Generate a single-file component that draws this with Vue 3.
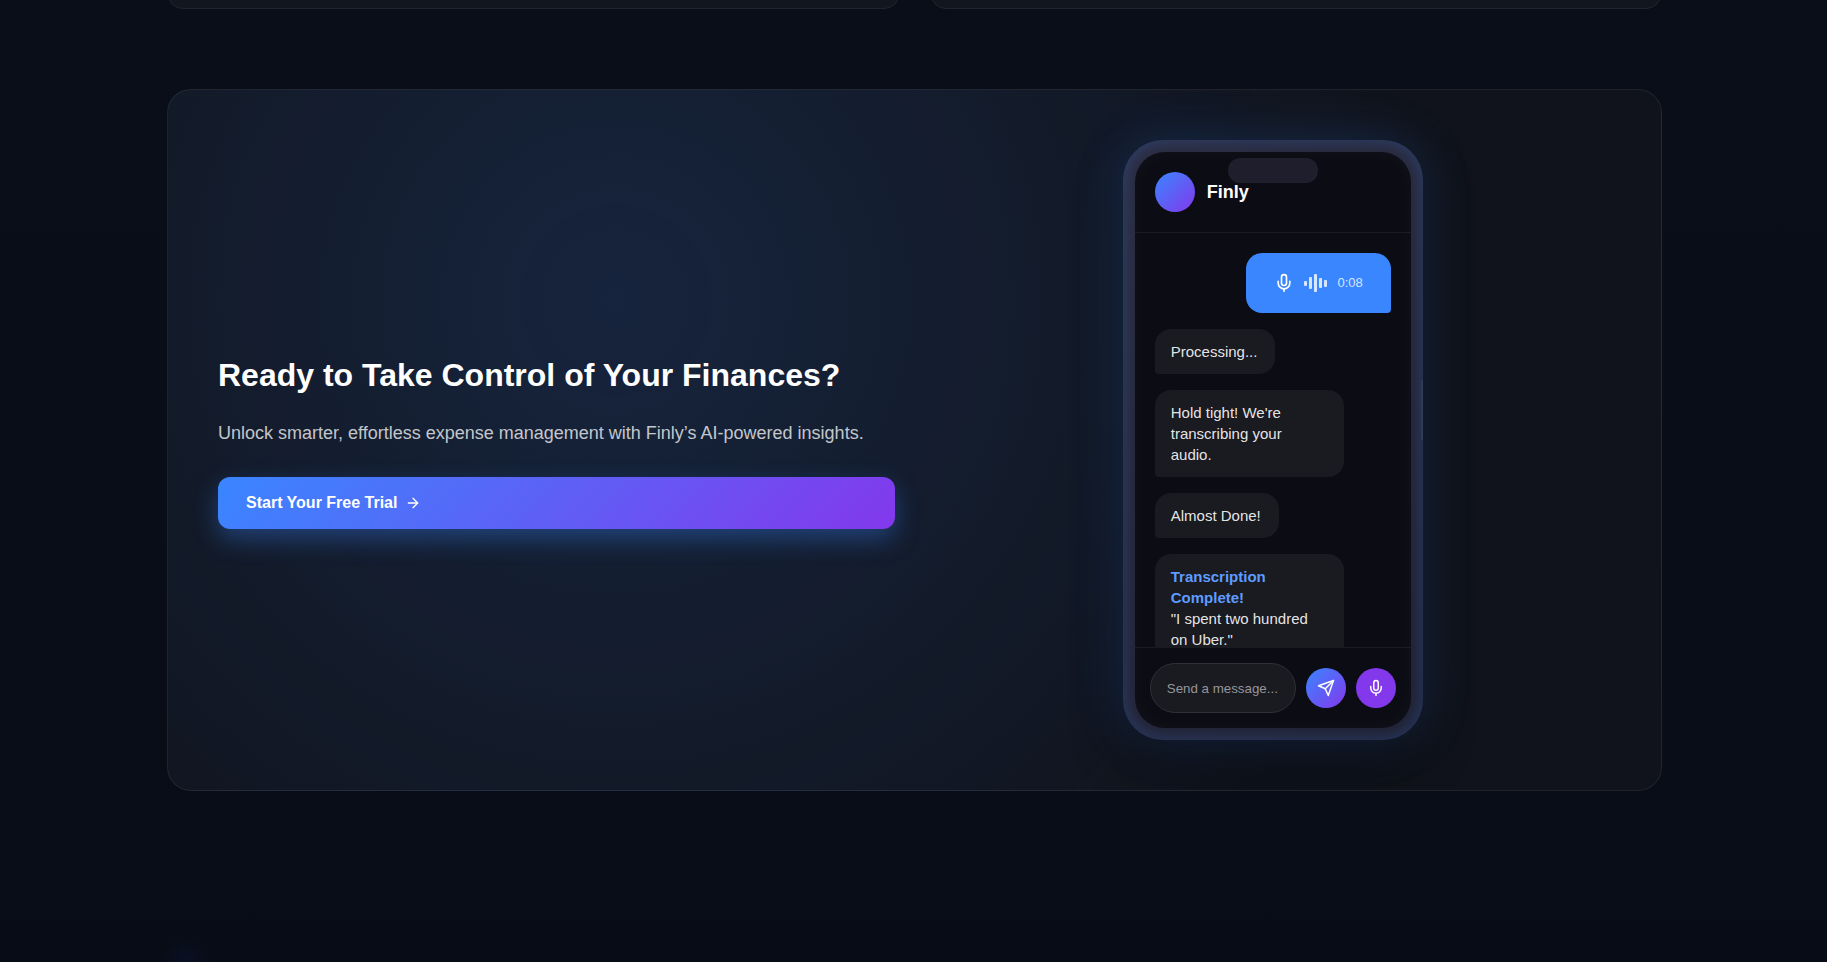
<script setup>
import { ref } from 'vue'

const draft = ref('')
const bars = [5, 12, 18, 10, 7]
</script>

<template>
  <main class="page">
    <div class="features">
      <div class="feature"></div>
      <div class="feature"></div>
    </div>

    <section class="cta">
      <div class="copy">
        <h2>Ready to Take Control of Your Finances?</h2>
        <p>Unlock smarter, effortless expense management with Finly’s AI-powered insights.</p>
        <a class="trial" href="#">
          Start Your Free Trial
          <svg class="icon-sm" viewBox="0 0 24 24" aria-hidden="true">
            <path d="M5 12h14" />
            <path d="m12 5 7 7-7 7" />
          </svg>
        </a>
      </div>

      <div class="stage">
        <div class="phone">
          <div class="notch"></div>
          <div class="side-key"></div>
          <div class="screen">
            <header class="chat-head">
              <span class="avatar"></span>
              <span class="name">Finly</span>
            </header>

            <div class="messages">
              <div class="bubble sent">
                <div class="voice">
                  <svg class="icon-lg" viewBox="0 0 24 24" aria-hidden="true">
                    <path d="M12 2a3 3 0 0 0-3 3v7a3 3 0 0 0 6 0V5a3 3 0 0 0-3-3Z" />
                    <path d="M19 10v2a7 7 0 0 1-14 0v-2" />
                    <path d="M12 19v3" />
                  </svg>
                  <div class="wave">
                    <span v-for="(h, i) in bars" :key="i" :style="{ height: h + 'px' }"></span>
                  </div>
                  <span class="time">0:08</span>
                </div>
              </div>
              <div class="bubble">Processing...</div>
              <div class="bubble">Hold tight! We're transcribing your audio.</div>
              <div class="bubble">Almost Done!</div>
              <div class="bubble"><strong>Transcription Complete!</strong><br />"I spent two hundred on Uber."</div>
            </div>

            <form class="composer" @submit.prevent>
              <input v-model="draft" type="text" aria-label="Message" placeholder="Send a message..." />
              <button class="send" type="submit" aria-label="Send">
                <svg class="icon-md" viewBox="0 0 24 24" aria-hidden="true">
                  <path d="M22 2 11 13" />
                  <path d="m22 2-7 20-4-9-9-4Z" />
                </svg>
              </button>
              <button class="record" type="button" aria-label="Record audio">
                <svg class="icon-md" viewBox="0 0 24 24" aria-hidden="true">
                  <path d="M12 2a3 3 0 0 0-3 3v7a3 3 0 0 0 6 0V5a3 3 0 0 0-3-3Z" />
                  <path d="M19 10v2a7 7 0 0 1-14 0v-2" />
                  <path d="M12 19v3" />
                </svg>
              </button>
            </form>
          </div>
        </div>
      </div>
    </section>
  </main>
</template>

<style>
body {
  background: #080d17;
}
</style>

<style scoped>
* {
  box-sizing: border-box;
}

.page {
  min-height: 100vh;
  padding: 0 165px 80px 167px;
  overflow: hidden;
  color: #fff;
  font-family: "Liberation Sans", Arial, sans-serif;
  background:
    radial-gradient(circle at 186px 100%, rgba(20, 32, 84, 0.22), transparent 26px),
    linear-gradient(to bottom, #090e18, #090d17 75%, #070c16);
}

.features {
  display: grid;
  grid-template-columns: 1fr 1fr;
  gap: 30px;
  margin-top: -31px;
}

.feature {
  height: 40px;
  border: 1px solid #20242d;
  border-radius: 16px;
  background: #12161f;
}

.cta {
  display: grid;
  grid-template-columns: 1fr 1fr;
  align-items: center;
  gap: 40px;
  margin-top: 80px;
  padding: 50px;
  overflow: hidden;
  border: 1px solid rgba(255, 255, 255, 0.07);
  border-radius: 24px;
  background:
    radial-gradient(circle at 30% 30%, rgba(58, 134, 255, 0.15), transparent 70%),
    #10131b;
}

.copy {
  display: flex;
  flex-direction: column;
}

h2 {
  margin: 0 0 20px;
  font-size: 32px;
  line-height: 48px;
  font-weight: 700;
}

p {
  margin: 0 0 30px;
  color: rgba(255, 255, 255, 0.75);
  font-size: 18px;
  line-height: 28px;
}

.trial {
  display: flex;
  align-items: center;
  gap: 8px;
  padding: 16px 28px;
  border-radius: 12px;
  background: linear-gradient(135deg, #3a86ff, #8338ec);
  box-shadow: 0 10px 25px rgba(58, 134, 255, 0.35);
  color: #fff;
  font-size: 16px;
  line-height: 20px;
  font-weight: 700;
  text-decoration: none;
}

svg {
  flex: none;
  fill: none;
  stroke: currentColor;
  stroke-width: 2;
  stroke-linecap: round;
  stroke-linejoin: round;
}

.icon-sm {
  width: 16px;
  height: 16px;
}

.icon-md {
  width: 18px;
  height: 18px;
}

.icon-lg {
  width: 20px;
  height: 20px;
}

.stage {
  display: flex;
  justify-content: center;
}

.phone {
  position: relative;
  width: 300px;
  height: 600px;
  padding: 12px;
  border-radius: 40px;
  background: linear-gradient(145deg, #2b2b3c, #20202f);
  box-shadow:
    0 0 50px rgba(58, 134, 255, 0.2),
    0 25px 50px rgba(0, 0, 0, 0.4),
    inset 0 0 20px rgba(58, 134, 255, 0.3);
}

.notch {
  position: absolute;
  z-index: 1;
  top: 18px;
  left: 50%;
  width: 90px;
  height: 25px;
  margin-left: -45px;
  border-radius: 12px;
  background: #1e1e2c;
}

.side-key {
  position: absolute;
  top: 240px;
  right: 0;
  width: 2px;
  height: 60px;
  background: #2f3c54;
}

.screen {
  display: flex;
  flex-direction: column;
  height: 100%;
  overflow: hidden;
  border-radius: 30px;
  background: #0c0c14;
  box-shadow: inset 0 0 20px rgba(255, 255, 255, 0.03);
}

.chat-head {
  display: flex;
  flex: none;
  align-items: center;
  gap: 12px;
  padding: 20px;
  border-bottom: 1px solid rgba(255, 255, 255, 0.06);
}

.avatar {
  width: 40px;
  height: 40px;
  border-radius: 50%;
  background: linear-gradient(135deg, #3a86ff, #8338ec);
}

.name {
  font-size: 18px;
  font-weight: 700;
}

.messages {
  display: flex;
  flex: 1;
  flex-direction: column;
  align-items: flex-start;
  gap: 16px;
  min-height: 0;
  padding: 20px;
  overflow: hidden;
}

.bubble {
  flex: none;
  max-width: 80%;
  padding: 12px 18px 12px 16px;
  border-radius: 16px 16px 16px 4px;
  background: #1a1a21;
  color: rgba(255, 255, 255, 0.9);
  font-size: 15px;
  line-height: 21px;
}

.bubble strong {
  color: #5e9cff;
}

.sent {
  align-self: flex-end;
  padding: 12px 16px;
  border-radius: 16px 16px 4px 16px;
  background: #3a86ff;
  color: #fff;
}

.voice {
  display: flex;
  align-items: center;
  gap: 10px;
  padding: 8px 12px;
}

.wave {
  display: flex;
  align-items: center;
  gap: 2px;
}

.wave span {
  width: 3px;
  border-radius: 1px;
  background: rgba(255, 255, 255, 0.8);
}

.time {
  color: rgba(255, 255, 255, 0.8);
  font-size: 13px;
  line-height: 20px;
}

.composer {
  display: flex;
  flex: none;
  align-items: center;
  gap: 10px;
  padding: 15px;
  border-top: 1px solid rgba(255, 255, 255, 0.06);
}

input {
  flex: 1;
  min-width: 0;
  height: 50px;
  padding: 0 16px;
  border: 1px solid #303035;
  border-radius: 25px;
  outline: none;
  background: #1a1a21;
  color: #fff;
  font-family: inherit;
}

input::placeholder {
  color: #96969a;
}

button {
  display: flex;
  flex: none;
  align-items: center;
  justify-content: center;
  width: 40px;
  height: 40px;
  padding: 0;
  border: 0;
  border-radius: 50%;
  color: #fff;
}

.send {
  background: linear-gradient(135deg, #3a86ff, #8338ec);
}

.record {
  background: #8338ec;
}
</style>
